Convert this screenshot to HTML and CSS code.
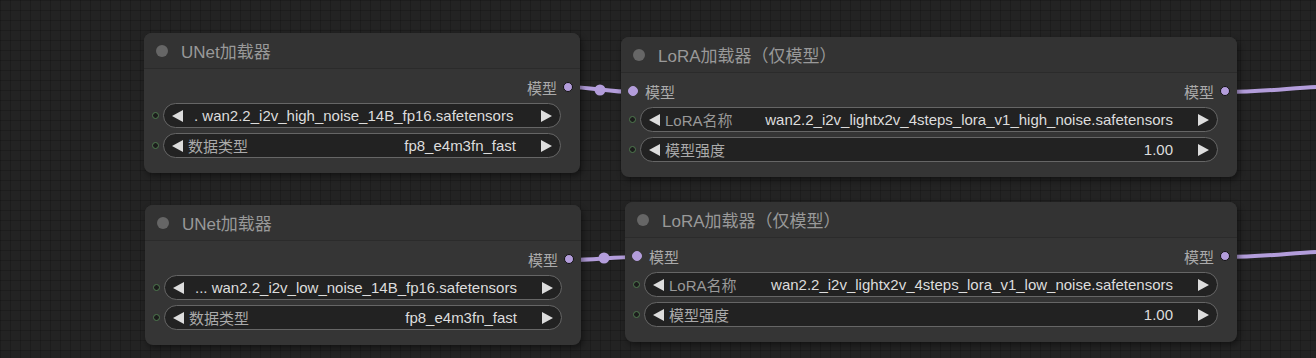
FILE: index.html
```html
<!DOCTYPE html>
<html lang="zh-CN">
<head>
    <meta charset="UTF-8">
    <title>ComfyUI - Wan2.2 加载器</title>
    <link rel="stylesheet" href="styles.css">
</head>
<body>

<div class="canvas">
    <svg class="links" width="1316" height="358" viewBox="0 0 1316 358">
        <path d="M568,87 C590,87 610,92 632,92"/>
        <circle cx="600" cy="90" r="5.5"/>
        <path d="M1225,92 C1265,92 1290,88 1316,87"/>
        <path d="M570,260 C592,260 615,257 637,257"/>
        <circle cx="604" cy="258" r="5.5"/>
        <path d="M1225,257 C1265,257 1290,253 1316,252"/>
    </svg>

    <!-- UNet 高噪声 -->
    <div class="node unet-high">
        <div class="node-title"><span class="title-dot"></span>UNet加载器</div>
        <div class="node-body">
            <div class="slots">
                <span></span>
                <span class="slot out">模型 <i class="dot"></i></span>
            </div>
            <div class="widget-row">
                <i class="w-dot"></i>
                <div class="widget">
                    <i class="arrow-l"></i>
                    <span class="value full">. wan2.2_i2v_high_noise_14B_fp16.safetensors</span>
                    <i class="arrow-r"></i>
                </div>
            </div>
            <div class="widget-row">
                <i class="w-dot"></i>
                <div class="widget">
                    <i class="arrow-l"></i>
                    <span class="label">数据类型</span>
                    <span class="value">fp8_e4m3fn_fast</span>
                    <i class="arrow-r"></i>
                </div>
            </div>
        </div>
    </div>

    <div class="node lora-high">
        <div class="node-title"><span class="title-dot"></span>LoRA加载器（仅模型）</div>
        <div class="node-body">
            <div class="slots">
                <span class="slot in"><i class="dot linked"></i> 模型</span>
                <span class="slot out">模型 <i class="dot"></i></span>
            </div>
            <div class="widget-row">
                <i class="w-dot"></i>
                <div class="widget">
                    <i class="arrow-l"></i>
                    <span class="label dim">LoRA名称</span>
                    <span class="value">wan2.2_i2v_lightx2v_4steps_lora_v1_high_noise.safetensors</span>
                    <i class="arrow-r"></i>
                </div>
            </div>
            <div class="widget-row">
                <i class="w-dot"></i>
                <div class="widget">
                    <i class="arrow-l"></i>
                    <span class="label">模型强度</span>
                    <span class="value">1.00</span>
                    <i class="arrow-r"></i>
                </div>
            </div>
        </div>
    </div>

    <!-- UNet 低噪声 -->
    <div class="node unet-low">
        <div class="node-title"><span class="title-dot"></span>UNet加载器</div>
        <div class="node-body">
            <div class="slots">
                <span></span>
                <span class="slot out">模型 <i class="dot"></i></span>
            </div>
            <div class="widget-row">
                <i class="w-dot"></i>
                <div class="widget">
                    <i class="arrow-l"></i>
                    <span class="value full">... wan2.2_i2v_low_noise_14B_fp16.safetensors</span>
                    <i class="arrow-r"></i>
                </div>
            </div>
            <div class="widget-row">
                <i class="w-dot"></i>
                <div class="widget">
                    <i class="arrow-l"></i>
                    <span class="label">数据类型</span>
                    <span class="value">fp8_e4m3fn_fast</span>
                    <i class="arrow-r"></i>
                </div>
            </div>
        </div>
    </div>

    <div class="node lora-low">
        <div class="node-title"><span class="title-dot"></span>LoRA加载器（仅模型）</div>
        <div class="node-body">
            <div class="slots">
                <span class="slot in"><i class="dot linked"></i> 模型</span>
                <span class="slot out">模型 <i class="dot"></i></span>
            </div>
            <div class="widget-row">
                <i class="w-dot"></i>
                <div class="widget">
                    <i class="arrow-l"></i>
                    <span class="label dim">LoRA名称</span>
                    <span class="value">wan2.2_i2v_lightx2v_4steps_lora_v1_low_noise.safetensors</span>
                    <i class="arrow-r"></i>
                </div>
            </div>
            <div class="widget-row">
                <i class="w-dot"></i>
                <div class="widget">
                    <i class="arrow-l"></i>
                    <span class="label">模型强度</span>
                    <span class="value">1.00</span>
                    <i class="arrow-r"></i>
                </div>
            </div>
        </div>
    </div>
</div>

</body>
</html>
```

FILE: styles.css
```css
body {
    margin: 0;
    padding: 0;
    font-family: 'Liberation Sans', Arial, 'Noto Sans CJK SC', sans-serif;
    background: #222;
    overflow: hidden;
}

.canvas {
    position: relative;
    width: 1316px;
    height: 358px;
    background-color: #232323;
    background-image:
        linear-gradient(to right, rgba(0, 0, 0, 0.18) 1px, transparent 1px),
        linear-gradient(to bottom, rgba(0, 0, 0, 0.18) 1px, transparent 1px);
    background-size: 10px 10px;
}

.links {
    position: absolute;
    left: 0;
    top: 0;
}

.links path {
    fill: none;
    stroke: #b39ddb;
    stroke-width: 4;
}

.links circle {
    fill: #b39ddb;
}

/* nodes sit on a free canvas */
.node {
    position: absolute;
    height: 140px;
    background: #353535;
    border-radius: 8px;
    box-shadow: 2px 3px 6px rgba(0, 0, 0, 0.45);
    box-sizing: border-box;
}

.unet-high { left: 144px; top: 33px; width: 436px; }
.lora-high { left: 621px; top: 37px; width: 616px; }
.unet-low  { left: 145px; top: 205px; width: 436px; }
.lora-low  { left: 625px; top: 202px; width: 612px; }

.node-title {
    height: 35px;
    display: flex;
    align-items: center;
    gap: 13px;
    padding-left: 12px;
    font-size: 17px;
    color: #999;
    border-bottom: 1px solid #2b2b2b;
    border-radius: 8px 8px 0 0;
    background: #333;
}

.title-dot {
    width: 12px;
    height: 12px;
    border-radius: 50%;
    background: #666;
}

.node-body {
    padding: 8px 0 15px 0;
}

.slots {
    height: 20px;
    display: flex;
    justify-content: space-between;
    align-items: center;
    font-size: 15px;
    color: #aaa;
    margin-bottom: 6px;
}

.slot {
    display: flex;
    align-items: center;
    gap: 4px;
}

.slot.in { padding-left: 7px; gap: 7px; }
.slot.out { padding-right: 7px; gap: 6px; }

.dot {
    width: 8px;
    height: 8px;
    border-radius: 50%;
    background: #b39ddb;
    border: 1px solid #111;
}

.dot.linked {
    border-color: #b39ddb;
}

.widget-row {
    display: flex;
    align-items: center;
    height: 25px;
    margin-bottom: 5px;
}

.w-dot {
    width: 5px;
    height: 5px;
    margin: 0 4px 0 8px;
    border-radius: 50%;
    border: 1px solid #4f7a4f;
    background: #1c1c1c;
}

.widget {
    flex: 1;
    margin-right: 19px;
    height: 23px;
    display: flex;
    align-items: center;
    background: #222;
    border: 1px solid #666;
    border-radius: 13px;
    font-size: 15px;
    padding: 0 8px;
}

.arrow-l {
    width: 0;
    height: 0;
    border-top: 6px solid transparent;
    border-bottom: 6px solid transparent;
    border-right: 11px solid #ddd;
    margin-right: 5px;
}

.arrow-r {
    width: 0;
    height: 0;
    border-top: 6px solid transparent;
    border-bottom: 6px solid transparent;
    border-left: 11px solid #ddd;
    margin-left: 25px;
}

.label {
    color: #aaa;
    white-space: nowrap;
}

.label.dim {
    color: #999;
}

.value {
    flex: 1;
    text-align: right;
    color: #ddd;
    white-space: nowrap;
}

.value.full {
    text-align: left;
    padding-left: 6px;
}
```
